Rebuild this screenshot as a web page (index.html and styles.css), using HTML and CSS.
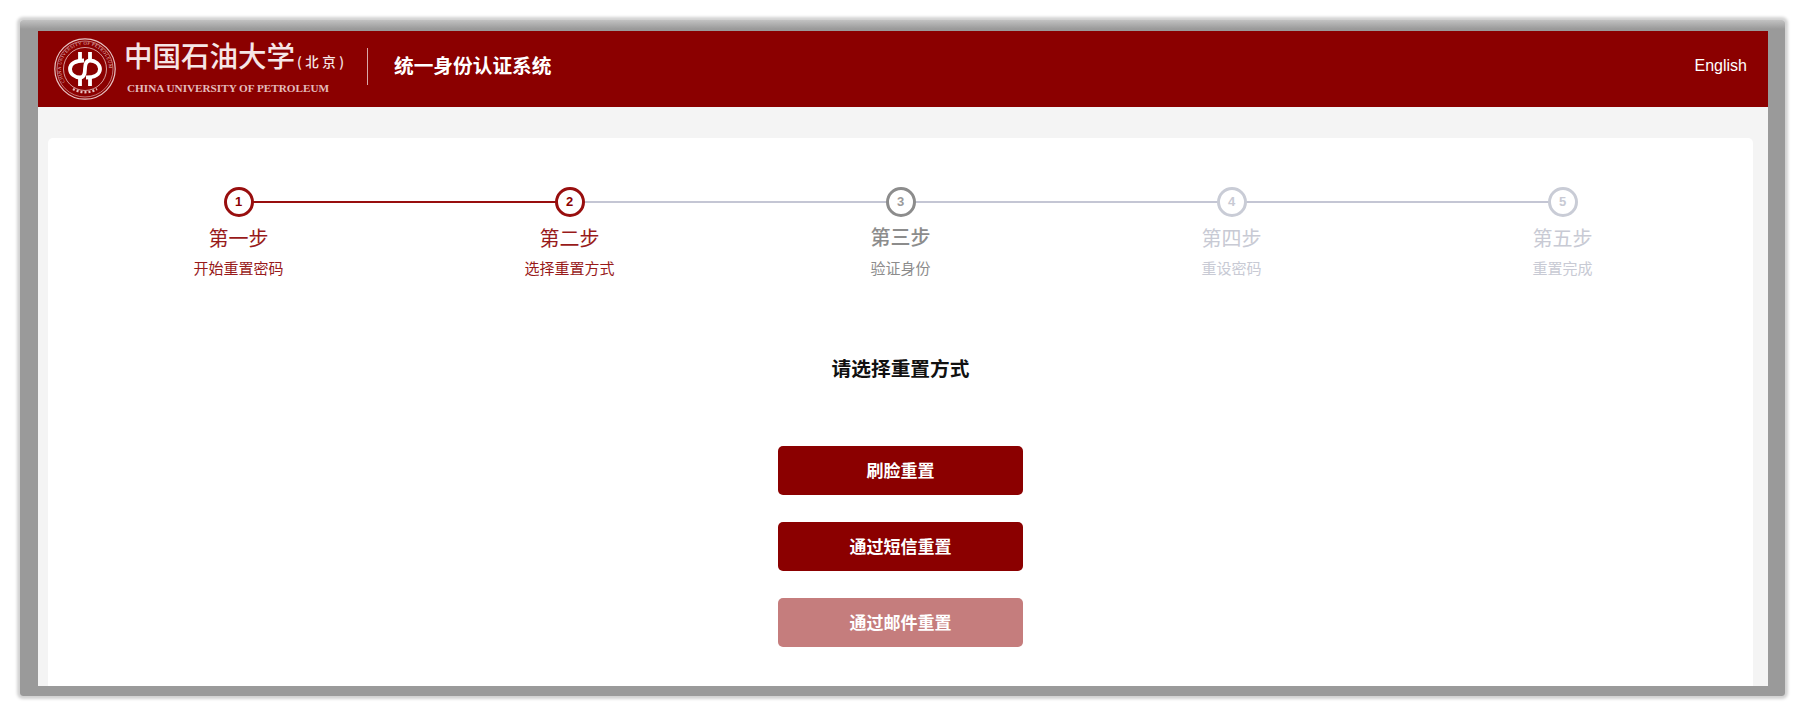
FILE: index.html
```html
<!DOCTYPE html>
<html lang="zh-CN">
<head>
    <meta charset="UTF-8">
    <title>统一身份认证系统</title>
    <link rel="stylesheet" href="styles.css">
</head>
<body>
    <div class="frame">
        <div class="page">
            <header class="topbar">
                <svg class="seal" viewBox="0 0 64 64" width="64" height="64">
                    <defs>
                        <path id="sealArc" d="M12 45 A24 24 0 1 1 52 45 A24 24 0 0 1 12 45"/>
                    </defs>
                    <circle cx="32" cy="32" r="30.2" fill="none" stroke="#e8c4c4" stroke-width="1.2"/>
                    <circle cx="32" cy="32" r="28" fill="none" stroke="#e8c4c4" stroke-width=".6"/>
                    <circle cx="32" cy="32" r="21.5" fill="none" stroke="#e8c4c4" stroke-width=".8"/>
                    <text class="seal-text"><textPath href="#sealArc">CHINA UNIVERSITY OF PETROLEUM</textPath></text>
                    <path d="M20 52 A24 24 0 0 0 44 52" fill="none" stroke="#e8c4c4" stroke-width="2.4" stroke-dasharray="2 2"/>
                    <g fill="none" stroke="#fff" stroke-width="3.8">
                        <path d="M27 15v10M37 15v10M27 39v10M37 39v10"/>
                        <path d="M31 23.5C22 23.5 17 27 17 32C17 37 22 40.5 27 40.5C31 40.5 32 36 32 32C32 28 33 23.5 37 23.5C42 23.5 47 27 47 32C47 37 42 40.5 33 40.5"/>
                    </g>
                </svg>
                <div class="brand">
                    <div class="brand-name">中国石油大学<span class="brand-campus">(北京)</span></div>
                    <div class="brand-en">CHINA UNIVERSITY OF PETROLEUM</div>
                </div>
                <div class="divider"></div>
                <div class="system-name">统一身份认证系统</div>
                <a class="lang">English</a>
            </header>

            <main class="card">
                <div class="steps">
                    <div class="step done">
                        <div class="dot">1</div>
                        <div class="step-title">第一步</div>
                        <div class="step-sub">开始重置密码</div>
                    </div>
                    <div class="step active">
                        <div class="dot">2</div>
                        <div class="step-title">第二步</div>
                        <div class="step-sub">选择重置方式</div>
                    </div>
                    <div class="step next">
                        <div class="dot">3</div>
                        <div class="step-title">第三步</div>
                        <div class="step-sub">验证身份</div>
                    </div>
                    <div class="step">
                        <div class="dot">4</div>
                        <div class="step-title">第四步</div>
                        <div class="step-sub">重设密码</div>
                    </div>
                    <div class="step">
                        <div class="dot">5</div>
                        <div class="step-title">第五步</div>
                        <div class="step-sub">重置完成</div>
                    </div>
                </div>

                <h2 class="choose-title">请选择重置方式</h2>

                <div class="choices">
                    <button class="choice">刷脸重置</button>
                    <button class="choice">通过短信重置</button>
                    <button class="choice disabled">通过邮件重置</button>
                </div>
            </main>
        </div>
    </div>
</body>
</html>
```

FILE: styles.css
```css
html, body { margin: 0; height: 100%; background: #fff; overflow: hidden; }
body { font-family: "Liberation Sans", "Noto Sans CJK SC", sans-serif; }

.frame {
    width: 1765px; height: 676px; margin: 20px 0 0 20px; padding: 11px 17px 10px 18px;
    box-sizing: border-box; border-radius: 3px;
    background: linear-gradient(#c2c2c2, #9a9a9a 9px);
    box-shadow: 0 0 3px 3px #d2d2d2;
}
.page { height: 100%; background: #f4f4f4; overflow: hidden; }

.topbar { height: 76px; box-sizing: border-box; background: #8b0000; display: flex; align-items: center; padding: 0 21px 6px 15px; color: #fff; }
.seal { flex: none; margin-top: 6px; }
.seal-text { font-family: "Liberation Serif", serif; font-size: 4.6px; fill: #e8c4c4; letter-spacing: .35px; }
.brand { margin-left: 7px; width: 234px; color: #f6e6e6; }
.brand-name { font-family: "Noto Sans CJK SC", sans-serif; font-size: 28.5px; line-height: 36px; font-weight: 500; white-space: nowrap; }
.brand-campus { font-size: 13.5px; letter-spacing: 3.5px; margin-left: 2px; }
.brand-en { font-family: "Liberation Serif", serif; font-weight: bold; font-size: 11.2px; line-height: 14px; margin: 2px 0 0 3px; color: #e3bcbc; white-space: nowrap; }
.divider { width: 1px; height: 37px; margin-left: 9px; background: #d9a8a8; }
.system-name { margin: 0 0 3px 26px; font-size: 19.7px; font-weight: bold; }
.lang { margin-left: auto; font-size: 16px; }

.card { margin: 31px 15px 0 10px; padding: 49px 25px 0; height: 560px; background: #fff; border-radius: 5px; }

.steps { display: flex; }
.step { position: relative; flex: 1; text-align: center; color: #c8cad4; }
.step::after { content: ""; position: absolute; left: 50%; top: 14px; width: 100%; height: 2px; background: #c4c6d4; }
.step:last-child::after { display: none; }
.dot {
    position: relative; z-index: 1; width: 30px; height: 30px; margin: 0 auto; box-sizing: border-box;
    border: 3px solid #c9ccd6; border-radius: 50%; background: #fff;
    font-size: 13px; line-height: 24px; font-weight: bold;
}
.step-title { margin-top: 8px; font-size: 20px; line-height: 28px; }
.step-sub { margin-top: 6px; font-size: 15px; line-height: 20px; }

.done, .active { color: #981a1a; }
.done .dot, .active .dot { border-color: #980e0e; color: #8b0000; }
.done::after { background: #980e0e; }
.next { color: #8c8c8c; }
.next .dot { border-color: #8c8c8c; color: #9a9a9a; }
.next .step-title { font-weight: 500; margin-top: 7px; line-height: 29px; }

.choose-title { margin: 76px 0 0; font-size: 19.7px; line-height: 28px; font-weight: bold; color: #111; text-align: center; }

.choices { display: flex; flex-direction: column; align-items: center; gap: 27px; margin-top: 63px; }
.choice {
    width: 245px; height: 49px; padding: 0 0 2px; border: none; border-radius: 5px; background: #8b0000; color: #fff;
    font-family: inherit; font-size: 17px; font-weight: bold; cursor: pointer;
}
.choice.disabled { background: #c57d7d; cursor: not-allowed; }
```
